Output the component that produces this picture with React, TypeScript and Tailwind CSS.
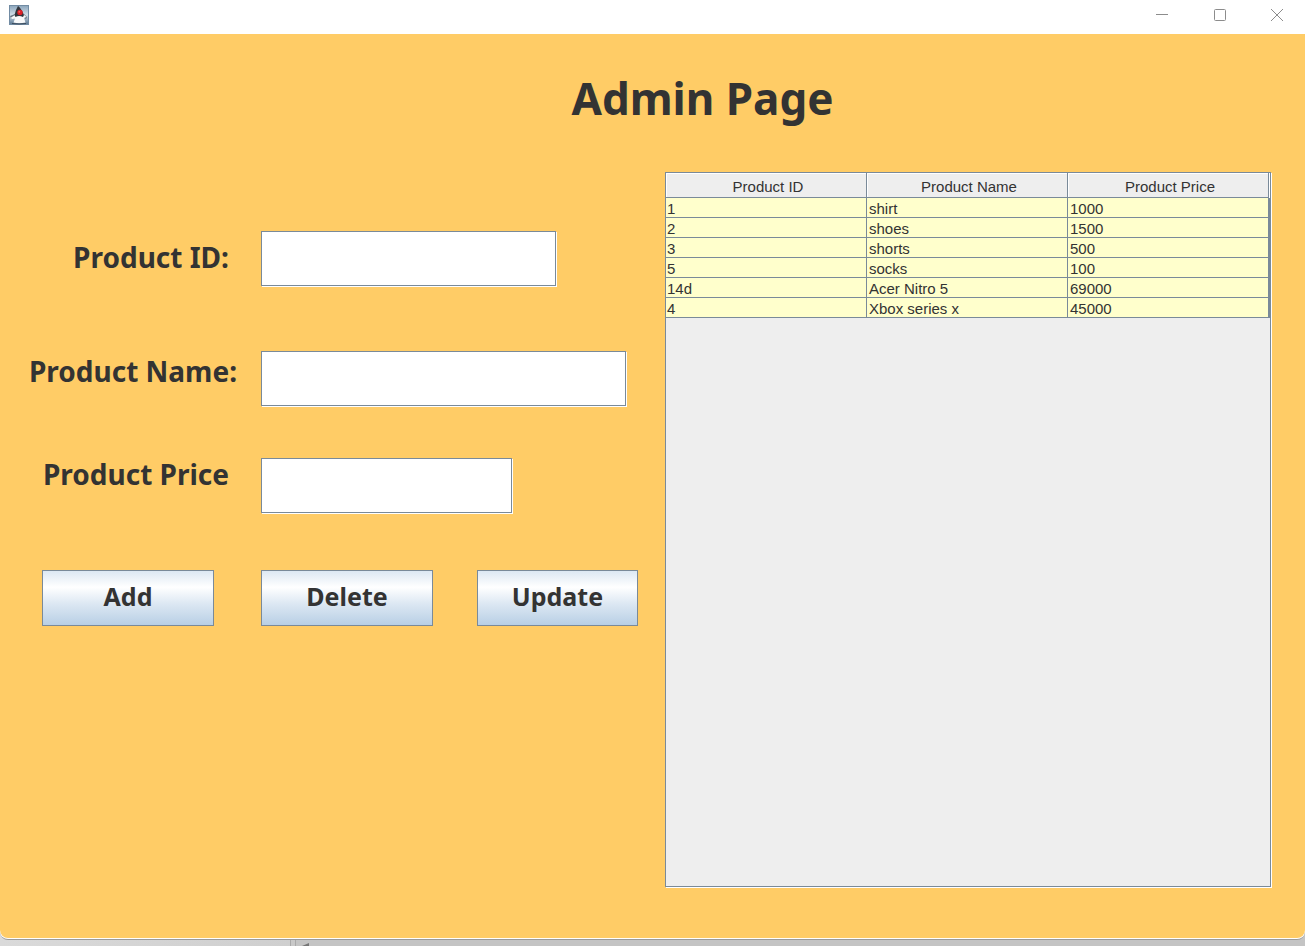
import React from "react";

const products = [
  { id: "1", name: "shirt", price: "1000" },
  { id: "2", name: "shoes", price: "1500" },
  { id: "3", name: "shorts", price: "500" },
  { id: "5", name: "socks", price: "100" },
  { id: "14d", name: "Acer Nitro 5", price: "69000" },
  { id: "4", name: "Xbox series x", price: "45000" },
];

const labelClass = "w-[261px] shrink-0 text-right text-[28px] leading-8 font-bold whitespace-nowrap";
const inputClass =
  "h-[55px] border border-[#7a8a99] bg-white px-2 text-xl shadow-[1px_1px_0_#ffffff] outline-none";
const buttonClass =
  "h-14 border border-[#7a8a99] bg-[linear-gradient(180deg,#dde8f3_0%,#ffffff_30%,#dde8f3_60%,#b8cfe5_100%)] pb-0.5 text-[25px] font-bold";

function JavaIcon() {
  return (
    <svg width="20" height="20" viewBox="0 0 20 20" aria-hidden="true">
      <defs>
        <linearGradient id="tile" x1="0" y1="0" x2="0" y2="1">
          <stop offset="0" stopColor="#8aa4bb" />
          <stop offset="0.5" stopColor="#d3dfe9" />
          <stop offset="1" stopColor="#587590" />
        </linearGradient>
      </defs>
      <rect x="0.5" y="0.5" width="19" height="19" fill="url(#tile)" stroke="#718ba3" />
      <path d="M1 11 L6 9 L5 12 L2 13Z M15 9 L18 12 L17 14 L14 12Z" fill="#66727f" />
      <path d="M6 10 L2 12.5 L3 14 L6 13.5 L4.5 17.5 Q10 19 16.5 17.5 L15 13 L17.5 12 L14 9Z" fill="#f8f9fa" />
      <path d="M9 1 Q12 3 15 10 L14 12 Q10 10 6.5 12 L5.5 10 Q7 4 9 1Z" fill="#30343b" />
      <path d="M3 18.5 Q10 19.5 17 18.5" stroke="#3c4c5c" fill="none" />
      <circle cx="11" cy="7.5" r="2.7" fill="#df2027" />
      <circle cx="10.3" cy="6.8" r="0.9" fill="#f56b68" />
    </svg>
  );
}

function TitleBar() {
  return (
    <header className="flex h-[34px] shrink-0 items-start justify-between rounded-tl-lg bg-white pl-[9px]">
      <div className="pt-[5px]">
        <JavaIcon />
      </div>
      <div className="flex h-[30px] text-[#8c8c8c]">
        <button type="button" aria-label="Minimize" className="flex w-[58px] items-center justify-center">
          <svg width="12" height="12" viewBox="0 0 12 12" fill="none" stroke="currentColor">
            <path d="M0 5.5H12" />
          </svg>
        </button>
        <button type="button" aria-label="Maximize" className="flex w-[58px] items-center justify-center">
          <svg width="12" height="12" viewBox="0 0 12 12" fill="none" stroke="currentColor">
            <rect x="0.5" y="0.5" width="11" height="11" rx="1" />
          </svg>
        </button>
        <button type="button" aria-label="Close" className="flex w-14 items-center justify-center">
          <svg width="12" height="12" viewBox="0 0 12 12" fill="none" stroke="currentColor">
            <path d="M0 0L12 12M12 0L0 12" />
          </svg>
        </button>
      </div>
    </header>
  );
}

function ProductForm() {
  return (
    <form className="w-[638px] shrink-0 pt-[59px]" onSubmit={(e) => e.preventDefault()}>
      <div className="flex items-start">
        <label htmlFor="product-id" className={`${labelClass} pt-2.5 pr-8`}>
          Product ID:
        </label>
        <input id="product-id" type="text" className={`${inputClass} w-[295px]`} />
      </div>
      <div className="mt-[65px] flex items-start">
        <label htmlFor="product-name" className={`${labelClass} pt-1 pr-6`}>
          Product Name:
        </label>
        <input id="product-name" type="text" className={`${inputClass} w-[365px]`} />
      </div>
      <div className="mt-[52px] flex items-start">
        <label htmlFor="product-price" className={`${labelClass} pr-8`}>
          Product Price
        </label>
        <input id="product-price" type="text" className={`${inputClass} w-[251px]`} />
      </div>
      <div className="mt-[57px] flex pl-[42px]">
        <button type="button" className={`${buttonClass} mr-[47px] w-[172px]`}>
          Add
        </button>
        <button type="button" className={`${buttonClass} mr-11 w-[172px]`}>
          Delete
        </button>
        <button type="button" className={`${buttonClass} w-[161px]`}>
          Update
        </button>
      </div>
    </form>
  );
}

function ProductTable() {
  return (
    <div className="ml-[27px] flex-1 border border-[#7a8a99] bg-[#eeeeee] pr-px shadow-[1px_1px_0_#ffffff]">
      <table className="w-full table-fixed border-separate border-spacing-0 font-['Liberation_Sans',Arial,sans-serif] text-[15px] leading-[18px]">
        <thead className="shadow-[1px_0_0_#ffffff]">
          <tr>
            {["Product ID", "Product Name", "Product Price"].map((title) => (
              <th
                key={title}
                scope="col"
                className="h-[25px] border-r border-b border-[#7a8a99] p-0 pt-1 pl-1 font-normal shadow-[inset_1px_1px_0_#ffffff]"
              >
                {title}
              </th>
            ))}
          </tr>
        </thead>
        <tbody className="bg-[#ffffcc] shadow-[2px_0_0_#7a8a99]">
          {products.map((product) => (
            <tr key={product.id}>
              {[product.id, product.name, product.price].map((value, column) => (
                <td
                  key={column}
                  className="h-5 border-r border-b border-[#7a8a99] p-0 pt-0.5 pl-0.5 leading-[17px] first:pl-px"
                >
                  {value}
                </td>
              ))}
            </tr>
          ))}
        </tbody>
      </table>
    </div>
  );
}

export default function App() {
  return (
    <div className="flex min-h-screen flex-col bg-[linear-gradient(90deg,#dadada,#cfcfcf_290px,#c4c4c4_296px)] font-['Noto_Sans','Open_Sans',sans-serif] text-[#333333]">
      <div className="flex flex-1 flex-col rounded-b-lg border-b border-[#999999] bg-white pb-px">
        <TitleBar />
        <main className="flex flex-1 flex-col rounded-b-lg bg-[#ffcc66] pr-[34px] pb-[51px]">
          <h1 className="pt-8 pl-[134px] text-center text-[44px] leading-[64px] font-bold">Admin Page</h1>
          <div className="mt-[42px] flex flex-1">
            <ProductForm />
            <ProductTable />
          </div>
        </main>
      </div>
      <div className="flex h-1.5 shrink-0">
        <div className="ml-[290px] w-1.5 border-x border-[#aaaaaa] bg-[#c8c8c8]" />
        <svg className="ml-1.5" width="8" height="6" viewBox="0 0 8 6" aria-hidden="true">
          <path d="M0 6L7 3V6Z" fill="#777777" />
        </svg>
      </div>
    </div>
  );
}
